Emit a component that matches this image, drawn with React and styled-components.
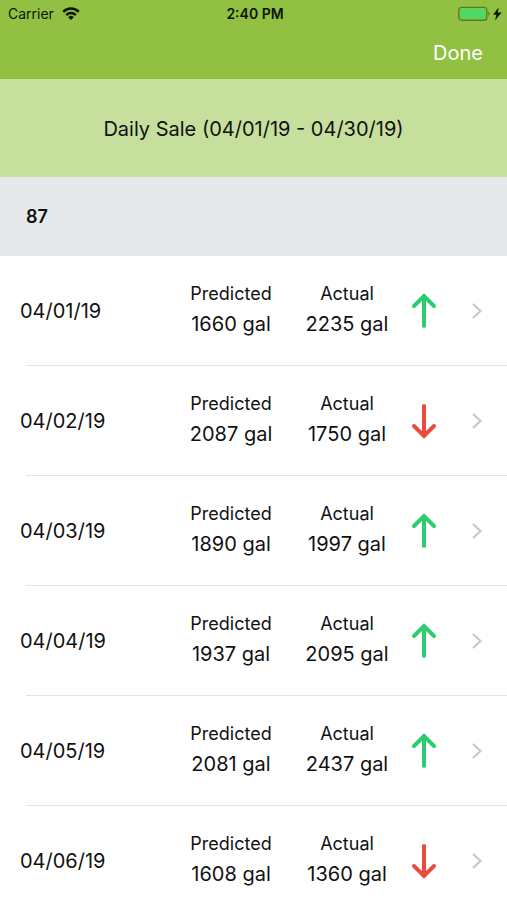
import React from 'react'
import styled, { createGlobalStyle } from 'styled-components'

const sales = [
    { date: '04/01/19', predicted: 1660, actual: 2235 },
    { date: '04/02/19', predicted: 2087, actual: 1750 },
    { date: '04/03/19', predicted: 1890, actual: 1997 },
    { date: '04/04/19', predicted: 1937, actual: 2095 },
    { date: '04/05/19', predicted: 2081, actual: 2437 },
    { date: '04/06/19', predicted: 1608, actual: 1360 },
]

const WifiIcon = () => (
    <svg width='18' height='14' viewBox='0 0 18 14' aria-hidden='true'>
        <g fill='none' stroke='#0c1404' strokeWidth='2.5'>
            <path d='M1.2 4.8a11 11 0 0 1 15.6 0' />
            <path d='M4.2 8.1a6.8 6.8 0 0 1 9.6 0' />
        </g>
        <path d='M6.2 10.2a4 4 0 0 1 5.6 0L9 13z' fill='#0c1404' />
    </svg>
)

const BatteryIcon = () => (
    <svg width='44' height='16' viewBox='0 0 44 16' aria-hidden='true'>
        <rect x='0.8' y='1.4' width='28' height='12.8' rx='2.8' fill='none' stroke='#5c7a2c' strokeWidth='1.4' />
        <rect x='2.2' y='2.8' width='25.2' height='10' rx='1.6' fill='#4cd964' />
        <path d='M30.2 5.8v4c1.8-.5 1.8-3.5 0-4z' fill='#5c7a2c' />
        <path d='M40.6 1.4 35 8.8h3.4L37 14.6l6.6-8h-3.8z' fill='#0c1404' />
    </svg>
)

const TrendIcon = ({ up }) => (
    <svg width='26' height='36' viewBox='0 0 26 36' role='img' aria-label={up ? 'Above prediction' : 'Below prediction'}>
        <path
            d={up ? 'M13 33V3M3 13 13 3l10 10' : 'M13 3v30M3 23l10 10 10-10'}
            fill='none'
            stroke={up ? '#2ecc71' : '#e74c3c'}
            strokeWidth='4'
            strokeLinecap='round'
            strokeLinejoin='miter'
        />
    </svg>
)

const ChevronIcon = () => (
    <svg width='12' height='18' viewBox='0 0 12 18' aria-hidden='true'>
        <path d='M2 2l7.5 7L2 16' fill='none' stroke='#c7c7cc' strokeWidth='2.2' />
    </svg>
)

const SaleRow = ({ sale }) => (
    <Row>
        <RowLink href={'#' + sale.date}>
            <DateText>{sale.date}</DateText>
            <Figure>
                <Label>Predicted</Label>
                <Amount>{sale.predicted} gal</Amount>
            </Figure>
            <Figure>
                <Label>Actual</Label>
                <Amount>{sale.actual} gal</Amount>
            </Figure>
            <Trend>
                <TrendIcon up={sale.actual > sale.predicted} />
            </Trend>
            <Disclosure>
                <ChevronIcon />
            </Disclosure>
        </RowLink>
    </Row>
)

const App = () => {
    return (
        <Screen>
            <GlobalStyle />
            <Header>
                <StatusBar>
                    <Carrier>
                        Carrier
                        <WifiIcon />
                    </Carrier>
                    <Time>2:40 PM</Time>
                    <Power>
                        <BatteryIcon />
                    </Power>
                </StatusBar>
                <NavBar>
                    <DoneButton type='button'>Done</DoneButton>
                </NavBar>
            </Header>
            <Title>Daily Sale (04/01/19 - 04/30/19)</Title>
            <Content>
                <SectionHeader>87</SectionHeader>
                <List>
                    {sales.map((sale) => (
                        <SaleRow key={sale.date} sale={sale} />
                    ))}
                </List>
            </Content>
        </Screen>
    )
}

const GlobalStyle = createGlobalStyle`
* {
    box-sizing: border-box;
}
body {
    margin: 0;
    background: #fff;
    color: #111;
    font-family: Inter, 'Liberation Sans', sans-serif;
}
`

const Screen = styled.div`
    display: flex;
    flex-direction: column;
    height: 100vh;
`
const Header = styled.header`
    background: #91c042;
`
const StatusBar = styled.div`
    display: grid;
    grid-template-columns: 1fr auto 1fr;
    align-items: center;
    height: 27px;
    padding: 0 5px 0 8px;
    color: #0c1404;
    font-size: 14px;
`
const Carrier = styled.div`
    display: flex;
    align-items: center;
    gap: 8px;
`
const Time = styled.div`
    font-weight: 600;
`
const Power = styled.div`
    display: flex;
    justify-content: flex-end;
`
const NavBar = styled.nav`
    display: flex;
    justify-content: flex-end;
    align-items: center;
    height: 52px;
    padding: 0 24px;
`
const DoneButton = styled.button`
    padding: 0;
    border: 0;
    background: none;
    color: #fff;
    font-family: inherit;
    font-size: 20px;
    line-height: 24px;
    cursor: pointer;
`
const Title = styled.h1`
    margin: 0;
    padding: 38px 20px 36px;
    background: #c7df9c;
    font-size: 20px;
    font-weight: 400;
    line-height: 24px;
    text-align: center;
`
const Content = styled.main`
    flex: 1;
    min-height: 0;
    overflow-y: auto;
    scrollbar-width: none;
`
const SectionHeader = styled.h2`
    margin: 0;
    padding: 28px 26px 27px;
    background: #e6e8ec;
    font-size: 18px;
    font-weight: 600;
    line-height: 24px;
`
const List = styled.ul`
    margin: 0;
    padding: 0;
    list-style: none;
`
const Row = styled.li`
    &::after {
        content: '';
        display: block;
        height: 1px;
        margin-left: 26px;
        background: #e4e4e6;
    }
`
const RowLink = styled.a`
    display: grid;
    grid-template-columns: 1fr 116px 116px 38px 40px;
    align-items: center;
    height: 109px;
    padding: 0 24px 0 20px;
    color: inherit;
    text-decoration: none;
`
const DateText = styled.span`
    font-size: 20px;
    line-height: 24px;
`
const Figure = styled.span`
    display: flex;
    flex-direction: column;
    align-items: center;
    gap: 6px;
    padding-bottom: 4px;
`
const Label = styled.span`
    font-size: 18px;
    line-height: 24px;
`
const Amount = styled.span`
    font-size: 20px;
    line-height: 24px;
`
const Trend = styled.span`
    display: flex;
    justify-content: center;
`
const Disclosure = styled.span`
    display: flex;
    justify-content: flex-end;
`

export default App
